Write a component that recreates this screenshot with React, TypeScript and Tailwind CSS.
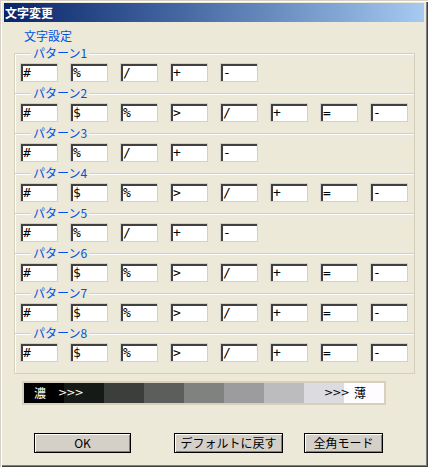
import React from 'react';

const patterns: string[][] = [
    ['#', '%', '/', '+', '-'],
    ['#', '$', '%', '>', '/', '+', '=', '-'],
    ['#', '%', '/', '+', '-'],
    ['#', '$', '%', '>', '/', '+', '=', '-'],
    ['#', '%', '/', '+', '-'],
    ['#', '$', '%', '>', '/', '+', '=', '-'],
    ['#', '$', '%', '>', '/', '+', '=', '-'],
    ['#', '$', '%', '>', '/', '+', '=', '-'],
];

const shades = ['#000000', '#161a16', '#3c3e3c', '#5c5e5c', '#808280', '#9c9b9d', '#bcbbbe', '#dcdbe0', '#fffcff'];

const jp = "font-['Noto_Sans_CJK_JP',sans-serif]";

function CharBox({ value }: { value: string }) {
    return (
        <div className="w-[38px] h-[19px] bg-white border border-[#d4d0c8] shadow-[inset_2px_2px_#404040] pl-[2px] pt-[1px] text-[13px] leading-[16px] text-black antialiased font-['DejaVu_Sans_Mono',monospace]">
            {value}
        </div>
    );
}

function Btn({ label, width }: { label: string; width: string }) {
    return (
        <button
            className={`${width} h-[20px] bg-[#d4d0c8] border border-black shadow-[inset_1px_1px_#ffffff,inset_-1px_-1px_#808080] text-[12px] leading-[18px] text-black ${jp}`}
        >
            {label}
        </button>
    );
}

export default function App() {
    return (
        <div className="w-[428px] h-[467px] bg-[#ece9d8] p-[4px] pt-[3px] shadow-[inset_1px_1px_#d4d0c8,inset_2px_2px_#ffffff,inset_-1px_-1px_#404040,inset_-2px_-2px_#808080] flex flex-col antialiased">
            {/* title bar */}
            <div className={`h-[19px] bg-gradient-to-r from-[#0a246a] to-[#a6caf0] text-white font-bold text-[12px] leading-[19px] pl-[1px] ${jp}`}>
                文字変更
            </div>

            <div className={`mt-[7px] ml-[20px] h-[14px] text-[12px] leading-[14px] text-[#0050e6] ${jp}`}>文字設定</div>

            {/* pattern group */}
            <div className="mt-[10px] ml-[10px] w-[401px] border-x border-b border-[#d5cfbb] shadow-[inset_1px_0_#ffffff]">
                {patterns.map((row, i) => (
                    <div
                        key={i}
                        className="relative h-[40px] border-t border-[#d5cfbb] shadow-[inset_0_1px_#ffffff] pt-[9px] pl-[5px] flex gap-[12px]"
                    >
                        <span className={`absolute left-[16px] top-[-8px] px-[2px] bg-[#ece9d8] text-[12px] leading-[14px] text-[#0050e6] ${jp}`}>
                            パターン{i + 1}
                        </span>
                        {row.map((c, j) => (
                            <CharBox key={j} value={c} />
                        ))}
                    </div>
                ))}
            </div>

            {/* density bar */}
            <div className="relative mt-[7px] ml-[18px] w-[364px] h-[24px] border-2 border-[#d8d0bc] flex">
                {shades.map((c) => (
                    <div key={c} className="w-[40px] h-[20px]" style={{ backgroundColor: c }} />
                ))}
                <span className={`absolute left-[10px] top-[2px] text-[12px] leading-[16px] text-white ${jp}`}>濃</span>
                <span className="absolute left-[34px] top-[2px] text-[11px] leading-[16px] tracking-[-1px] text-white font-['DejaVu_Sans',sans-serif]">&gt;&gt;&gt;</span>
                <span className="absolute left-[300px] top-[2px] text-[11px] leading-[16px] tracking-[-1px] text-black font-['DejaVu_Sans',sans-serif]">&gt;&gt;&gt;</span>
                <span className={`absolute left-[330px] top-[2px] text-[12px] leading-[16px] text-black ${jp}`}>薄</span>
            </div>

            {/* buttons */}
            <div className="mt-[28px] ml-[30px] flex">
                <Btn label="OK" width="w-[97px]" />
                <div className="w-[43px]" />
                <Btn label="デフォルトに戻す" width="w-[109px]" />
                <div className="w-[21px]" />
                <Btn label="全角モード" width="w-[79px]" />
            </div>
        </div>
    );
}
